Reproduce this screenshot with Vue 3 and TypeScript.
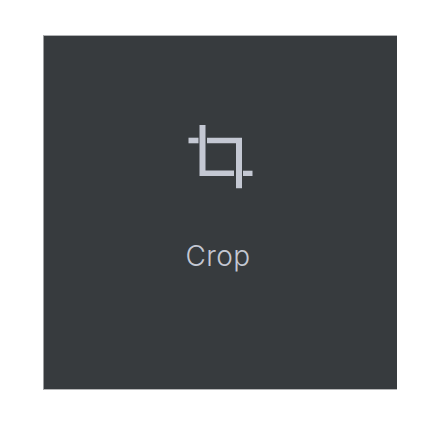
<script setup lang="ts">
const label: string = 'Crop'
</script>

<template>
  <div class="page">
    <div class="card">
      <svg class="icon" width="66" height="66" viewBox="0 0 66 66" fill="#c4c8d3" aria-hidden="true">
        <path d="M11.500 0h6v45.500h28.500v5.500h-34.500z" />
        <path d="M19 12.700h35v50.600h-6v-45h-29z" />
        <path d="M0.500 12.700h10v5.600h-10z" />
        <path d="M55 45.700h9.500v5.300h-9.500z" />
      </svg>
      <div class="label">{{ label }}</div>
    </div>
  </div>
</template>

<style scoped>
.page {
  width: 434px;
  height: 432px;
  background: #ffffff;
  padding: 35px 37px 42px 43px;
  box-sizing: border-box;
}
.card {
  width: 354px;
  height: 355px;
  background: #373b3e;
  border-top: 1px solid #b0b2b4;
  border-left: 1px solid #9b9d9f;
  border-bottom: 1px solid #b5b6b7;
  box-sizing: border-box;
  display: flex;
  flex-direction: column;
  align-items: center;
  padding-top: 89px;
}
.icon {
  display: block;
  margin-left: 1px;
}
.label {
  margin-top: 47px;
  margin-right: 5px;
  font-family: "Inter", "Liberation Sans", sans-serif;
  font-weight: 300;
  font-size: 28px;
  line-height: 36px;
  color: #c4c8d3;
  letter-spacing: 0.4px;
}
</style>
<style>
html, body { margin: 0; background: #fff; }
</style>
